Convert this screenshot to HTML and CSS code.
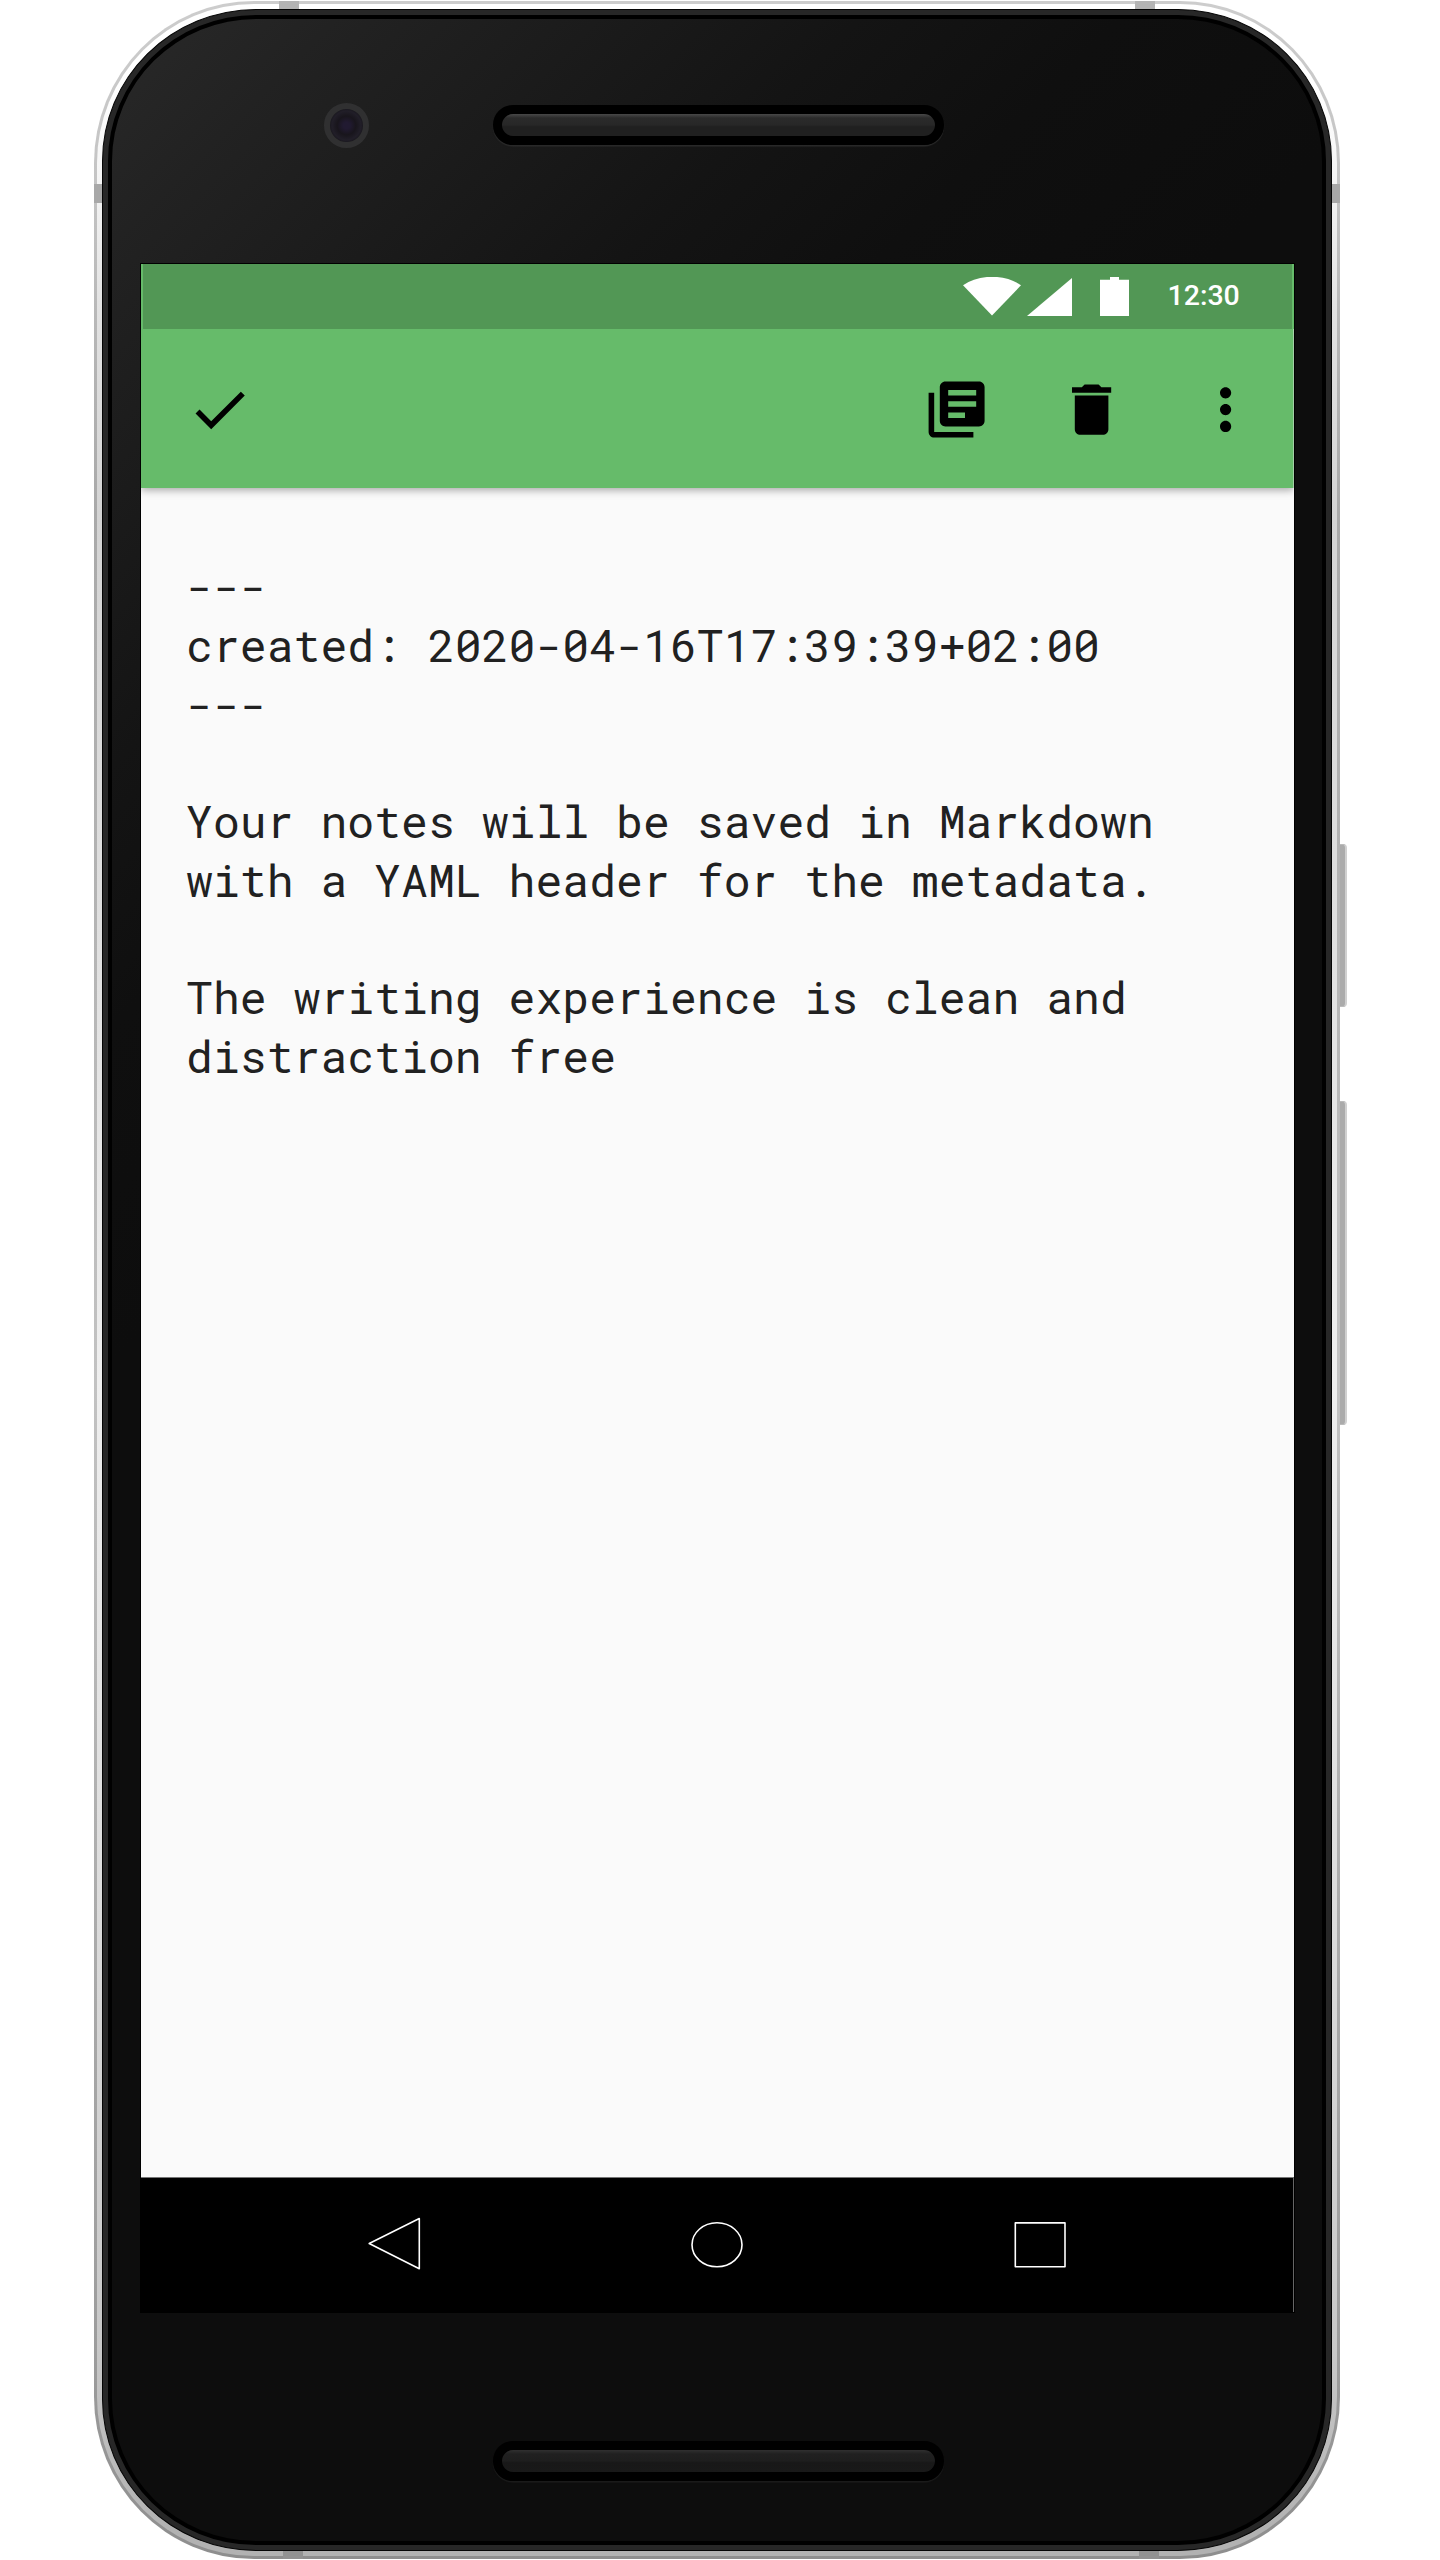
FILE: index.html
```html
<!DOCTYPE html>
<html lang="en">
<head>
<meta charset="utf-8">
<title>Note editor</title>
<link rel="stylesheet" href="styles.css">
</head>
<body>
<div class="phone">
  <span class="key key-power"></span>
  <span class="key key-volume"></span>
  <div class="shell">
    <span class="band band-top band-l"></span>
    <span class="band band-top band-r"></span>
    <span class="band band-bottom band-l"></span>
    <span class="band band-bottom band-r"></span>
    <span class="band band-side"></span>
    <div class="rim">
      <div class="face">
        <div class="forehead">
          <span class="camera"></span>
          <span class="speaker"></span>
        </div>
        <div class="screen">
          <div class="statusbar">
            <svg class="wifi" viewBox="0 0 58 39"><path d="M0 8.300Q12-.2 29-.2T58 8.300L29 38.500Z"/></svg>
            <svg class="signal" viewBox="0 0 45 38"><path d="M0 38L45 0V38Z"/></svg>
            <svg class="battery" viewBox="0 0 29 39"><path d="M0 2.800H10V0H19V2.800H29V39H0Z"/></svg>
            <span class="time">12:30</span>
          </div>
          <div class="appbar">
            <svg class="icon" viewBox="0 0 24 24"><path d="M9 16.170L4.830 12l-1.420 1.410L9 19 21 7l-1.410-1.410z"/></svg>
            <span class="spacer"></span>
            <svg class="icon" viewBox="0 0 24 24"><path d="M4 6H2v14c0 1.100.9 2 2 2h14v-2H4V6zm16-4H8c-1.100 0-2 .9-2 2v12c0 1.100.9 2 2 2h12c1.100 0 2-.9 2-2V4c0-1.100-.9-2-2-2zm-1 5H9V5h10v2zm0 4H9V9h10v2zm-4 4H9v-2h6v2z"/></svg>
            <svg class="icon" viewBox="0 0 24 24"><path d="M6 19c0 1.100.9 2 2 2h8c1.100 0 2-.9 2-2V7H6v12zM19 4h-3.500l-1-1h-5l-1 1H5v2h14V4z"/></svg>
            <svg class="icon" viewBox="0 0 24 24"><path d="M12 8c1.100 0 2-.9 2-2s-.9-2-2-2-2 .9-2 2 .9 2 2 2zm0 2c-1.100 0-2 .9-2 2s.9 2 2 2 2-.9 2-2-.9-2-2-2zm0 6c-1.100 0-2 .9-2 2s.9 2 2 2 2-.9 2-2-.9-2-2-2z"/></svg>
          </div>
          <div class="note">---
created: 2020-04-16T17:39:39+02:00
---

Your notes will be saved in Markdown
with a YAML header for the metadata.

The writing experience is clean and
distraction free</div>
          <div class="navbar">
            <svg class="nav" viewBox="0 0 54 54"><path d="M2.200 25.500L52.300 .500V50.700Z"/></svg>
            <svg class="nav" viewBox="0 0 54 54"><ellipse cx="27" cy="26.800" rx="25" ry="22"/></svg>
            <svg class="nav" viewBox="0 0 54 54"><path d="M2.300 4.900H52V48.800H2.300Z"/></svg>
          </div>
        </div>
        <div class="chin"><span class="speaker"></span></div>
      </div>
    </div>
  </div>
</div>
</body>
</html>
```
FILE: styles.css
```css
* { box-sizing: border-box; }
body { margin: 0; background: #fff; }
.phone { position: relative; width: 1440px; height: 2560px; padding: 1px 100px 1px 94px; overflow: hidden; }
.shell {
  position: relative; width: 1246px; height: 2558px; padding: 3px;
  border-radius: 160px / 162px;
  background: linear-gradient(#cdcdcd, #c4c4c4 7%, #b4b4b4 14%, #a9a9a9 20%, #b4b4b4 36%, #c2c2c2 54%, #ababab 75%, #9c9c9c 92%, #8e8e8e);
}
.shell::before {
  content: ""; position: absolute; inset: 3px; border-radius: 157px / 159px;
  background: linear-gradient(#fff 3%, #f4f4f4 7%, #e2e2e2 12%, #d4d4d4 20%, #e0e0e0 36%, #efefef 54%, #dcdcdc 75%, #c8c8c8 92%, #b2b2b2 99%);
}
.band { position: absolute; background: #b4b4b4; width: 20px; height: 9px; }
.band-top { top: 0; }
.band-bottom { bottom: 0; background: #929292; }
.band-top.band-l { left: 185px; }
.band-top.band-r { left: 1041px; }
.band-bottom.band-l { left: 189px; }
.band-bottom.band-r { left: 1045px; }
.band-side { left: 0; top: 183px; width: 100%; height: 19px; background: #a8a8a8; }
.rim {
  position: relative; width: 1230px; height: 2542px; margin: 5px 0 0 5px; padding: 5px;
  border: 1px solid #050505; border-radius: 154px / 152px; background: #272727;
}
.face {
  height: 100%; border: 4px solid #000; border-radius: 148px / 146px;
  padding: 0 28px 0 29px;
  background: linear-gradient(135deg, #292929 0, #222 6%, #1b1b1b 13%, #141414 20%, #0f0f0f 27%, #0d0d0d 36%);
}
.forehead { position: relative; height: 245px; padding: 86px 0 0 351.5px; }
.camera {
  position: absolute; left: 183px; top: 84px; width: 45px; height: 45px;
  border: 6px solid #303031; border-radius: 50%;
  background: radial-gradient(circle, #211a31 0 14%, #18151c 40%, #211e28 62%, #0c0b0f 90%);
  background-clip: padding-box;
}
.speaker {
  display: block; width: 451px; height: 40px; border: 9.5px solid #000; border-radius: 20px;
  background: linear-gradient(#484848, #2b2b2b 18%, #272727 50%, #202020 58%, #202020);
  box-shadow: 0 1.5px 1px #2a2a2a;
}
.screen {
  width: 1152.5px; height: 2048px; display: flex; flex-direction: column;
  background: #fafafa; outline: 1px solid #000;
}
.statusbar {
  height: 65px; display: flex; align-items: flex-start;
  padding-top: 13px; padding-left: 820px; background: #529755;
  border: solid #66bb6a; border-width: 0 2px; flex: none;
}
.statusbar svg { fill: #fff; flex: none; }
.wifi { width: 58px; height: 39px; }
.signal { width: 45px; height: 38px; margin: 1px 0 0 6px; }
.battery { width: 29px; height: 39px; margin-left: 28px; }
.time { margin: 0 0 0 38.5px; font: 500 28.5px/38px Roboto, sans-serif; color: #fff; }
.appbar {
  height: 159px; flex: none; display: flex; align-items: center; padding: 2px 34.2px 0 45px;
  background: #66bb6a; position: relative;
  box-shadow: 0 2px 8px rgba(0, 0, 0, .35); clip-path: inset(0 0 -24px 0);
}
.icon { width: 67.2px; height: 67.2px; margin-left: 67.2px; }
.icon:first-child { margin-left: 0; }
.spacer { flex: 1; }
.note {
  flex: 1; padding: 69.2px 40px 0 45px; white-space: pre; color: #212121;
  font-family: "Roboto Mono", "DejaVu Sans Mono", monospace; font-size: 44.8px;
  line-height: 58.75px;
}
.navbar {
  height: 135px; flex: none; display: flex; justify-content: center; align-items: center;
  gap: 269px; background: #000; border-top: 1px solid #777; border-right: 1px solid #666;
}
.nav { width: 54px; height: 54px; fill: none; stroke: #fff; stroke-width: 1.6; stroke-linejoin: round; overflow: visible; }
.chin { padding: 128.5px 0 0 351.5px; }
.chin .speaker {
  background: linear-gradient(#303030, #202020 18%, #1e1e1e 50%, #181818 58%, #191919);
  box-shadow: 0 1.5px 1px #1c1c1c;
}
.key {
  position: absolute; left: 1338px; width: 9px; border-radius: 0 4px 4px 0;
  background: #ababab; border: 1px solid #bbb; border-right: 2px solid #d0d0d0;
}
.key-power { top: 844px; height: 163px; }
.key-volume { top: 1101px; height: 324px; }
```
